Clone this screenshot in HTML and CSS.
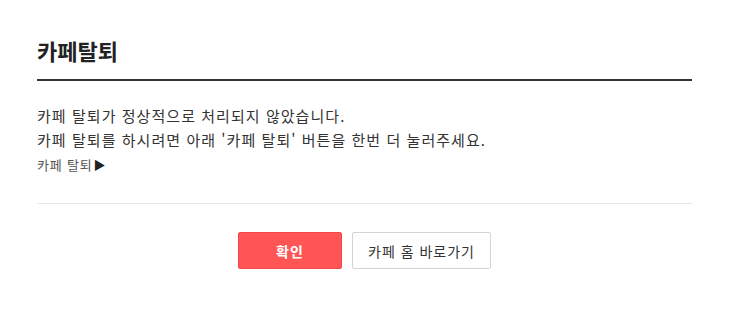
FILE: index.html
```html
<!DOCTYPE html>
<html lang="ko">
<head>
<meta charset="utf-8">
<title>카페탈퇴</title>
<link rel="stylesheet" href="styles.css">
</head>
<body>
<div class="page">
  <h2 class="title">카페탈퇴</h2>
  <div class="msg">
    <p class="line">카페 탈퇴가 정상적으로 처리되지 않았습니다.</p>
    <p class="line">카페 탈퇴를 하시려면 아래 '카페 탈퇴' 버튼을 한번 더 눌러주세요.</p>
    <a class="link" href="#">카페 탈퇴<span class="arrow">▶</span></a>
  </div>
  <div class="btns">
    <button class="btn btn-red" type="button">확인</button>
    <button class="btn btn-white" type="button">카페 홈 바로가기</button>
  </div>
</div>
</body>
</html>
```
FILE: styles.css
```css
html, body {
  margin: 0;
  padding: 0;
  background: #fff;
}
body {
  font-family: "Noto Sans CJK KR", "Noto Sans", sans-serif;
  color: #333;
}
.page {
  width: 655px;
  margin: 0 auto;
  padding-top: 35px;
}
.title {
  margin: 0;
  font-size: 22px;
  line-height: 30px;
  font-weight: 700;
  color: #222;
  letter-spacing: 0;
  padding-bottom: 14px;
  border-bottom: 2px solid #333;
}
.msg {
  padding: 23px 0 28px;
  border-bottom: 1px solid #e8e8e8;
}
.line {
  margin: 0;
  font-size: 15px;
  line-height: 24px;
  letter-spacing: 1.05px;
  color: #333;
}
.link {
  display: flex;
  width: max-content;
  align-items: center;
  margin-top: 3px;
  font-size: 13px;
  line-height: 20px;
  letter-spacing: 0.8px;
  color: #555;
  text-decoration: none;
}
.arrow {
  font-size: 12px;
  color: #222;
  letter-spacing: 0;
  margin-left: 1px;
}
.btns {
  display: flex;
  justify-content: center;
  gap: 10px;
  padding-top: 28px;
}
.btn {
  height: 37px;
  font-family: inherit;
  font-size: 14px;
  letter-spacing: 1px;
  border-radius: 2px;
  cursor: pointer;
  padding: 0;
}
.btn-red {
  width: 104px;
  background: #ff5555;
  border: 1px solid #f04848;
  color: #fff;
  font-weight: 700;
}
.btn-white {
  width: 139px;
  background: #fff;
  border: 1px solid #d4d4d4;
  color: #333;
}
```
